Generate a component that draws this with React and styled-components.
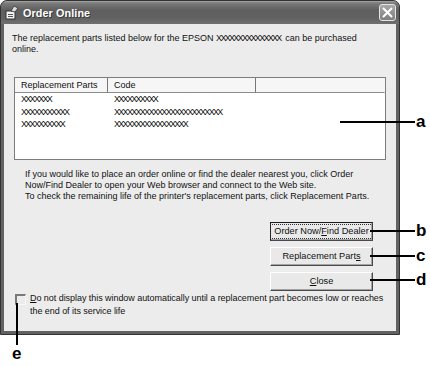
import React from 'react'
import styled, { createGlobalStyle } from 'styled-components'

const GlobalStyle = createGlobalStyle`
  html, body {
    margin: 0;
    padding: 0;
    background: #fff;
  }
  body {
    font-family: "Liberation Sans", Arial, sans-serif;
    color: #111;
  }
`

const Stage = styled.div`
  position: relative;
  width: 430px;
  height: 366px;
  overflow: hidden;
`

const Window = styled.div`
  width: 400px;
  height: 335px;
  box-sizing: border-box;
  display: flex;
  flex-direction: column;
  border: 1px solid #333;
  border-radius: 7px 7px 0 0;
  background: #626262;
  padding: 0 3px 3px;
`

const TitleBar = styled.div`
  height: 23px;
  margin: 0 -3px;
  padding: 0 3px 0 4px;
  display: flex;
  align-items: center;
  gap: 4px;
  border-radius: 6px 6px 0 0;
  background: linear-gradient(#a8a8a8 0, #7c7c7c 2px, #5f5f5f 9px, #616161 17px, #707070 23px);
`

const Title = styled.div`
  flex: 1;
  color: #fff;
  font-weight: 700;
  font-size: 10.8px;
  letter-spacing: 0.1px;
  text-shadow: 1px 1px 0 #3a3a3a;
`

const CloseBox = styled.div`
  width: 17px;
  height: 17px;
  box-sizing: border-box;
  border: 1px solid #e6e6e6;
  border-radius: 3px;
  background: linear-gradient(#a9a9a9, #7e7e7e);
  display: flex;
  align-items: center;
  justify-content: center;
`

const Body = styled.div`
  flex: 1;
  background: #ececec;
  padding: 9px 10px 0 8px;
  display: flex;
  flex-direction: column;
  font-size: 9px;
  line-height: 11px;
`

const Intro = styled.p`
  margin: 0;
  white-space: nowrap;
`

const Xs = styled.span`
  display: inline-block;
  letter-spacing: -1.7px;
  padding-right: 3px;
  margin-right: -1px;
`

const ListView = styled.div`
  margin: 22px 0 0 2px;
  height: 83px;
  box-sizing: border-box;
  border: 1px solid #7d7d7d;
  background: #fff;
`

const Grid = styled.div`
  display: grid;
  grid-template-columns: 93px 148px 1fr;
`

const HeadCell = styled.div`
  height: 14px;
  line-height: 14px;
  padding-left: 6px;
  background: #f6f6f6;
  border-bottom: 1px solid #8c8c8c;
  border-right: 1px solid ${p => (p.$last ? 'transparent' : '#777')};
`

const Cell = styled.div`
  height: 12.5px;
  line-height: 12.5px;
  padding-left: 6px;
  white-space: nowrap;
`

const Info = styled.p`
  margin: 9px 0 0 13px;
`

const ButtonStack = styled.div`
  margin: 20px 13px 0 0;
  display: flex;
  flex-direction: column;
  align-items: flex-end;
  gap: 6px;
`

const Button = styled.div`
  width: 103px;
  height: 19px;
  box-sizing: border-box;
  display: flex;
  align-items: center;
  justify-content: center;
  background: #e9e9e9;
  border: 1px solid ${p => (p.$default ? '#1a1a1a' : '#fff')};
  border-right-color: #4a4a4a;
  border-bottom-color: #4a4a4a;
  box-shadow: inset -1px -1px 0 #a3a3a3;
  font-size: 9.2px;
`

const Focus = styled.span`
  padding: 1px 3px;
  outline: 1px dotted #333;
`

const Key = styled.span`
  text-decoration: underline;
`

const CheckRow = styled.div`
  margin: 1px -8px 0 3px;
  display: flex;
  align-items: flex-start;
  gap: 4px;
  line-height: 12.5px;
`

const CheckLabel = styled.p`
  margin: 0;
  white-space: nowrap;
  letter-spacing: -0.05px;
`

const CheckBox = styled.div`
  flex: none;
  width: 11px;
  height: 11px;
  margin-top: 2px;
  box-sizing: border-box;
  border-top: 2px solid #7a7a7a;
  border-left: 2px solid #7a7a7a;
  border-right: 1px solid #f8f8f8;
  border-bottom: 1px solid #f8f8f8;
  background: #ececec;
`

const Callout = styled.div`
  position: absolute;
  left: ${p => p.$x}px;
  top: ${p => p.$y}px;
  display: flex;
  flex-direction: ${p => (p.$down ? 'column' : 'row')};
  align-items: center;
`

const Leader = styled.div`
  background: #000;
  width: ${p => (p.$down ? 2 : p.$len)}px;
  height: ${p => (p.$down ? p.$len : 2)}px;
`

const Letter = styled.span`
  font-weight: 700;
  font-size: 17px;
  line-height: 16px;
  color: #000;
  margin-left: ${p => (p.$down ? 0 : 1)}px;
  margin-top: ${p => (p.$down ? 1 : 0)}px;
`

const rows = [
  ['XXXXXXX', 'XXXXXXXXXX'],
  ['XXXXXXXXXXX', 'XXXXXXXXXXXXXXXXXXXXXXXXX'],
  ['XXXXXXXXXX', 'XXXXXXXXXXXXXXXXX'],
]

function AppIcon() {
  return (
    <svg width="14" height="15" viewBox="0 0 14 15">
      <rect x="1" y="6" width="9" height="8" fill="#f2f2f2" stroke="#333" strokeWidth="1" />
      <rect x="3" y="9" width="5" height="1" fill="#555" />
      <rect x="3" y="11" width="5" height="1" fill="#555" />
      <path d="M6 6 L9 1 L13 3 L10 7 Z" fill="#dcdcdc" stroke="#333" strokeWidth="0.8" />
    </svg>
  )
}

function CloseIcon() {
  return (
    <svg width="11" height="11" viewBox="0 0 11 11">
      <path d="M1.5 1.5 L9.5 9.5 M9.5 1.5 L1.5 9.5" stroke="#fff" strokeWidth="2" strokeLinecap="round" />
    </svg>
  )
}

export default function App() {
  return (
    <Stage>
      <GlobalStyle />
      <Window>
        <TitleBar>
          <AppIcon />
          <Title>Order Online</Title>
          <CloseBox>
            <CloseIcon />
          </CloseBox>
        </TitleBar>
        <Body>
          <Intro>
            The replacement parts listed below for the EPSON <Xs>XXXXXXXXXXXXXXX</Xs> can be purchased
            <br />
            online.
          </Intro>
          <ListView>
            <Grid>
              <HeadCell>Replacement Parts</HeadCell>
              <HeadCell>Code</HeadCell>
              <HeadCell $last />
              {rows.map(([part, code]) => (
                <React.Fragment key={part}>
                  <Cell><Xs>{part}</Xs></Cell>
                  <Cell><Xs>{code}</Xs></Cell>
                  <Cell />
                </React.Fragment>
              ))}
            </Grid>
          </ListView>
          <Info>
            If you would like to place an order online or find the dealer nearest you, click Order
            <br />
            Now/Find Dealer to open your Web browser and connect to the Web site.
            <br />
            To check the remaining life of the printer's replacement parts, click Replacement Parts.
          </Info>
          <ButtonStack>
            <Button $default>
              <Focus>Order Now/<Key>F</Key>ind Dealer</Focus>
            </Button>
            <Button>Replacement Part<Key>s</Key></Button>
            <Button><Key>C</Key>lose</Button>
          </ButtonStack>
          <CheckRow>
            <CheckBox />
            <CheckLabel>
              <Key>D</Key>o not display this window automatically until a replacement part becomes low or reaches
              <br />
              the end of its service life
            </CheckLabel>
          </CheckRow>
        </Body>
      </Window>

      <Callout $x={340} $y={114}>
        <Leader $len={75} />
        <Letter>a</Letter>
      </Callout>
      <Callout $x={370} $y={223}>
        <Leader $len={45} />
        <Letter>b</Letter>
      </Callout>
      <Callout $x={370} $y={248}>
        <Leader $len={45} />
        <Letter>c</Letter>
      </Callout>
      <Callout $x={370} $y={272}>
        <Leader $len={45} />
        <Letter>d</Letter>
      </Callout>
      <Callout $x={12} $y={303} $down>
        <Leader $down $len={42} />
        <Letter $down>e</Letter>
      </Callout>
    </Stage>
  )
}
